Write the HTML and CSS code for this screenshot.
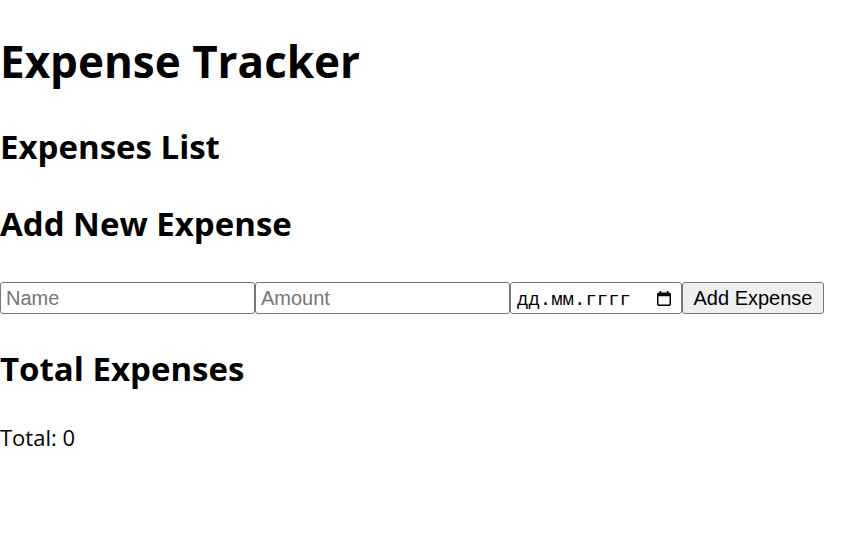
FILE: index.html
```html
<!DOCTYPE html>
<html lang="ru">
<head>
<meta charset="utf-8">
<title>Expense Tracker</title>
<link rel="stylesheet" href="styles.css">
</head>
<body>
<div class="app">
  <h1 class="title">Expense Tracker</h1>
  <h2 class="section section-list">Expenses List</h2>
  <h2 class="section section-add">Add New Expense</h2>
  <form class="expense-form"><input class="field field-text" type="text" placeholder="Name"><input class="field field-text" type="text" placeholder="Amount"><div class="field field-date"><span class="date-text">дд.мм.гггг</span><svg class="cal-icon" width="14" height="15" viewBox="0 0 14 15" aria-hidden="true"><rect x="2.5" y="0" width="1.8" height="3" fill="#000"/><rect x="9.7" y="0" width="1.8" height="3" fill="#000"/><rect x="0.75" y="2.25" width="12.5" height="12" rx="1.2" fill="none" stroke="#000" stroke-width="1.5"/><rect x="0.75" y="2.25" width="12.5" height="3" fill="#000"/></svg></div><button class="btn" type="button">Add Expense</button></form>
  <h2 class="section section-total">Total Expenses</h2>
  <p class="total">Total: 0</p>
</div>
</body>
</html>
```
FILE: styles.css
```css
html, body {
  margin: 0;
  padding: 0;
  background: #fff;
}
body {
  font-family: "Open Sans", "Noto Sans", sans-serif;
  color: #000;
}
.app {
  display: flow-root;
}
.title {
  font-size: 44px;
  line-height: 60px;
  font-weight: 700;
  margin: 31px 0 0;
}
.section {
  font-size: 33px;
  line-height: 44px;
  font-weight: 700;
  margin: 0;
}
.section-list { margin-top: 34px; }
.section-add { margin-top: 33px; }
.section-total { margin-top: 33px; }
.expense-form {
  display: flex;
  align-items: stretch;
  margin: 36px 0 0;
  height: 32px;
}
.field {
  box-sizing: border-box;
  height: 32px;
  border: 1px solid #767676;
  border-radius: 3px;
  background: #fff;
  margin: 0;
  font-family: "Liberation Sans", Arial, sans-serif;
  font-size: 20px;
  color: #000;
}
.field-text {
  width: 255px;
  padding: 0 5px;
  outline: none;
}
.field-text::placeholder {
  color: #757575;
}
.field-date {
  width: 172px;
  display: flex;
  align-items: center;
  justify-content: space-between;
  padding: 0 10px 0 6px;
}
.date-text {
  font-family: "Liberation Mono", "DejaVu Sans Mono", monospace;
  font-size: 19px;
  line-height: 1;
  padding-top: 4px;
}
.cal-icon {
  display: block;
  flex: none;
}
.btn {
  box-sizing: border-box;
  width: 142px;
  height: 32px;
  border: 1px solid #767676;
  border-radius: 3px;
  background: #efefef;
  font-family: "Liberation Sans", Arial, sans-serif;
  font-size: 20px;
  color: #000;
  padding: 0 9px;
  margin: 0;
}
.total {
  font-size: 22px;
  line-height: 32px;
  margin: 30px 0 0;
}
```
